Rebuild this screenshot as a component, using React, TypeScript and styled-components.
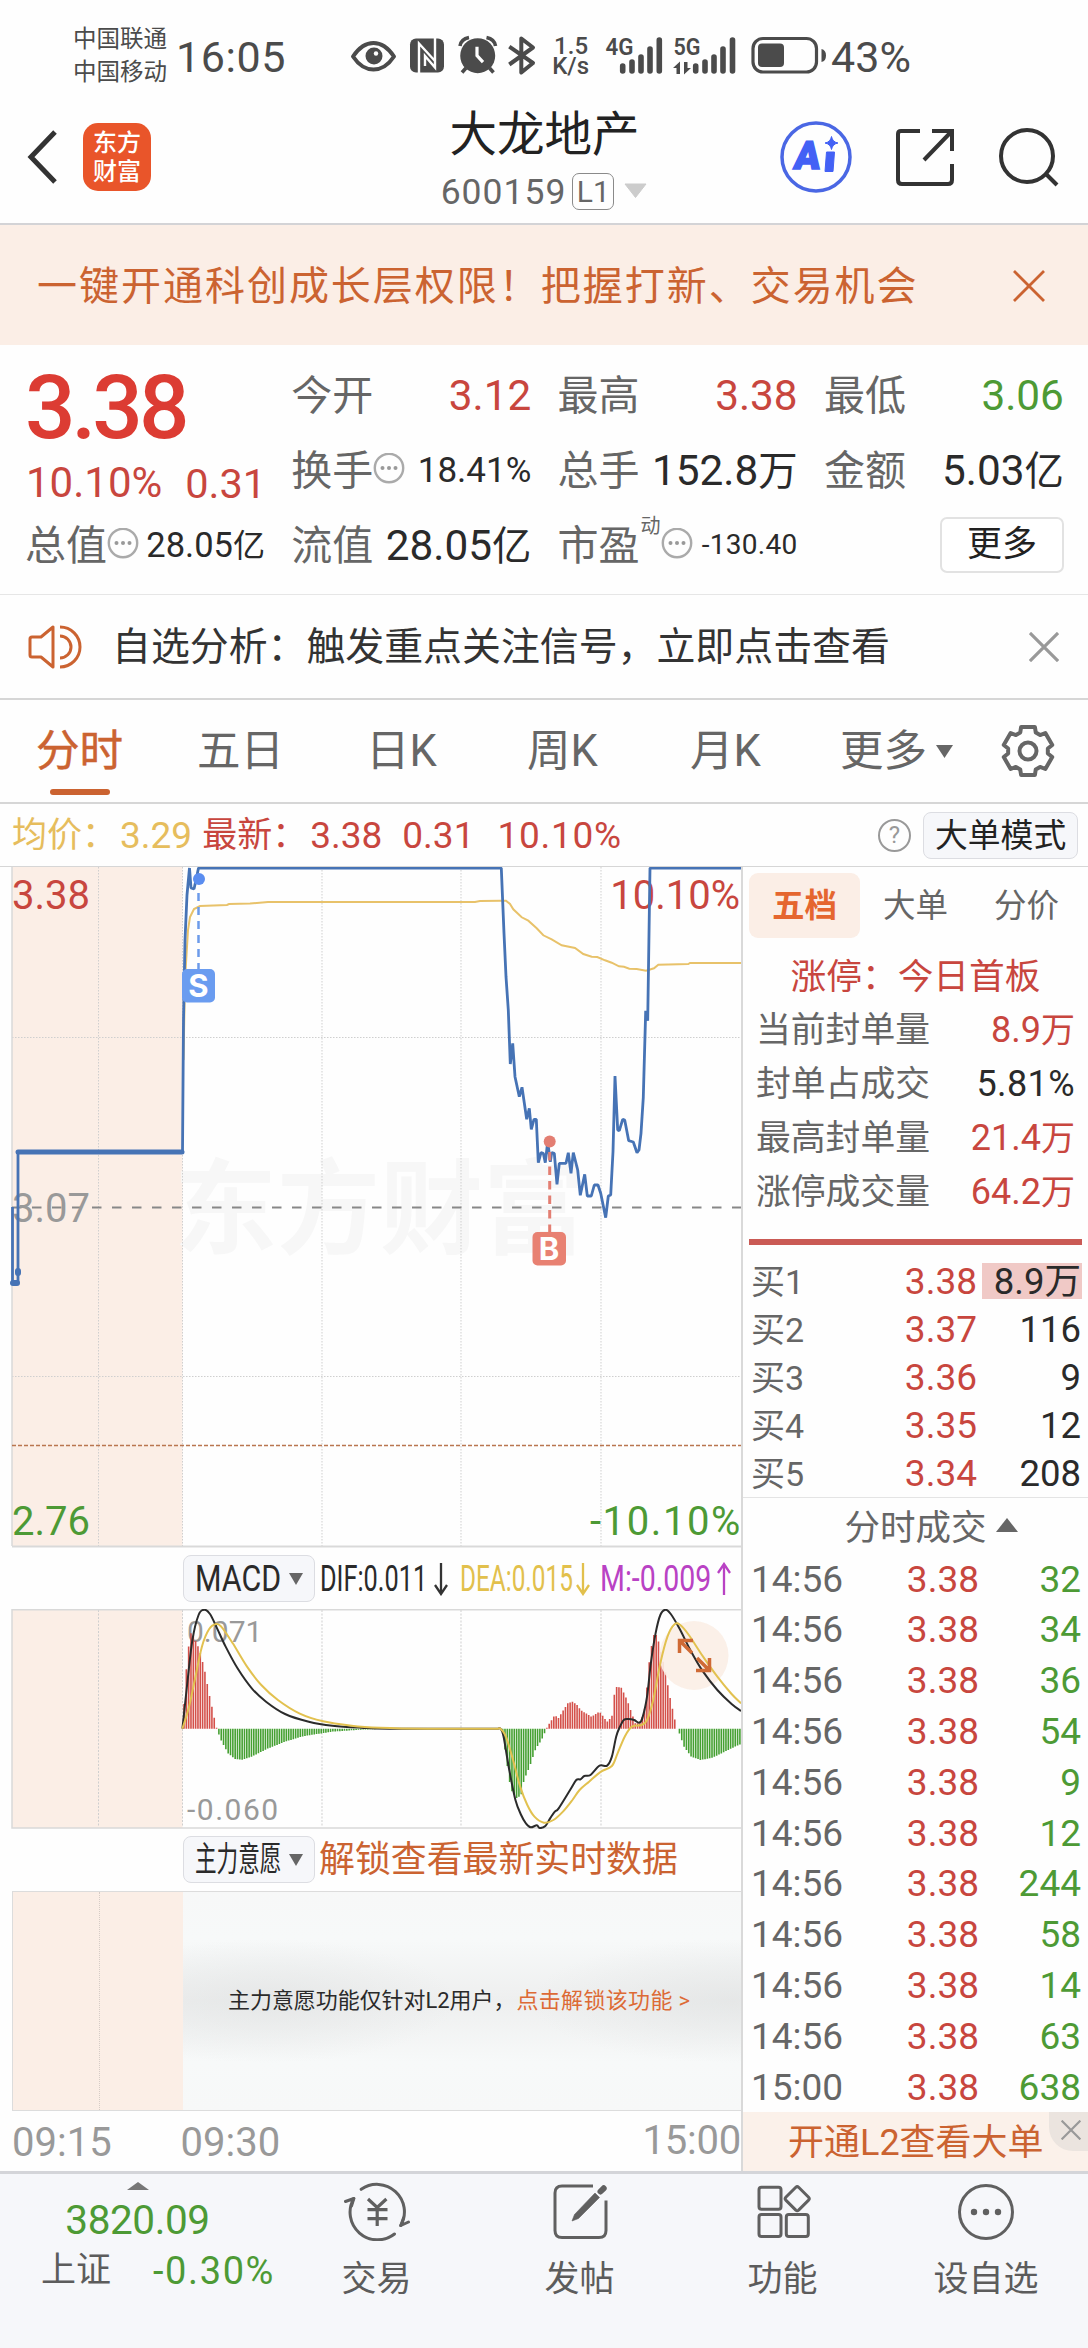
import React from "react";
import styled, { createGlobalStyle } from "styled-components";

const RED = "#c8463e";
const GREEN = "#4d9a35";
const ORANGE = "#cb6331";
const GREY = "#666666";
const INK = "#2a2a2a";
const PEACH = "#fbeee6";

const GlobalStyle = createGlobalStyle`
  * { box-sizing: border-box; }
  body {
    margin: 0;
    background: #fefefe;
    font-family: Roboto, "Noto Sans CJK SC", sans-serif;
    color: ${INK};
  }
  svg { display: block; flex: none; }
`;

const Screen = styled.div`
  width: 1088px;
  height: 2348px;
  overflow: hidden;
  display: flex;
  flex-direction: column;
`;

const Text = styled.span<{ $size: number; $color?: string; $weight?: number; $ls?: number; $ml?: number }>`
  font-size: ${(p) => p.$size}px;
  line-height: 1.1;
  padding-top: 0.08em;
  white-space: nowrap;
  color: ${(p) => p.$color ?? INK};
  font-weight: ${(p) => p.$weight ?? 400};
  letter-spacing: ${(p) => p.$ls ?? 0}px;
  margin-left: ${(p) => p.$ml ?? 0}px;
`;

/* Horizontally condensed label: the box has the final width, the glyphs shrink into it. */
const Narrow = styled.span<{ $size: number; $width: number; $scale: number; $color?: string; $ml?: number }>`
  display: block;
  flex: none;
  width: ${(p) => p.$width}px;
  margin-left: ${(p) => p.$ml ?? 0}px;
  font-size: ${(p) => p.$size}px;
  line-height: 1.1;
  white-space: nowrap;
  color: ${(p) => p.$color ?? INK};
  transform: scaleX(${(p) => p.$scale});
  transform-origin: 0 50%;
`;

/* ---------- status bar ---------- */

const StatusRow = styled.div`
  height: 106px;
  padding: 5px 0 0 73px;
  display: flex;
  align-items: center;
`;

const Stack = styled.div<{ $gap: number; $ml?: number; $width?: number }>`
  display: flex;
  flex-direction: column;
  align-items: center;
  margin-left: ${(p) => p.$ml ?? 0}px;
  width: ${(p) => (p.$width ? `${p.$width}px` : "auto")};
  & > * + * { margin-top: ${(p) => p.$gap}px; }
`;

const StatusIcons = styled.svg`
  margin-left: 61px;
`;

const StatusSignals = styled.svg`
  margin-left: 11px;
`;

const S = "#4b4b4b";

function StatusBar() {
  return (
    <StatusRow>
      <Stack $gap={5} $width={94}>
        <Text $size={23.5} $color={S}>中国联通</Text>
        <Text $size={23.5} $color={S}>中国移动</Text>
      </Stack>
      <Text $size={43} $color={S} $ml={9} $ls={0.6}>16:05</Text>
      <StatusIcons width="190" height="44" viewBox="346 34 190 44" fill="none" stroke={S}>
        <path d="M352 56.500C359 46 366 43 372.500 43S386 46 393 56.500C386 67 379 69.500 372.500 69.500S359 67 352 56.500Z" strokeWidth="4" strokeLinejoin="round" />
        <circle cx="373" cy="56" r="8.500" fill={S} stroke="none" />
        <circle cx="375" cy="53.500" r="2.200" fill="#fff" stroke="none" />
        <rect x="409" y="38.500" width="34" height="34" rx="6" fill={S} stroke="none" />
        <path d="M418 73V43.500L434 61M434 38V67.500L424 56V66" stroke="#fefefe" strokeWidth="2.400" />
        <circle cx="476.700" cy="55.700" r="17.500" fill={S} stroke="none" />
        <path d="M459 46q1-7 9-8.500M494.500 46q-1-7-9-8.500M465 68l-4 4.500M488.500 68l4 4.500" strokeWidth="3.600" />
        <path d="M476 46.700v9l6 6.500" stroke="#fff" strokeWidth="3.200" />
        <path d="M508.300 46.700L532 63l-11.700 9.500v-34L532 47.500 508.300 64.500" strokeWidth="4" strokeLinejoin="round" />
      </StatusIcons>
      <Stack $gap={-8} $ml={13} $width={42}>
        <Text $size={24} $color={S} $weight={500}>1.5</Text>
        <Text $size={24} $color={S} $weight={500} $ml={-1}>K/s</Text>
      </Stack>
      <StatusSignals width="226" height="44" viewBox="602 34 226 44" fill={S}>
        <text x="604.500" y="55" fontSize="24" fontWeight="600" textLength="28" lengthAdjust="spacingAndGlyphs">4G</text>
        <g stroke={S} strokeWidth="5.600" strokeLinecap="round">
          <path d="M621.700 66V71M631 62V71M640 57V71M649 49V71M658.300 40V71" />
          <path d="M694.700 66V71M704 62V71M713 57V71M722 49V71M731.500 40V71" />
        </g>
        <text x="672.500" y="55" fontSize="24" fontWeight="600" textLength="27" lengthAdjust="spacingAndGlyphs">5G</text>
        <path d="M672 68l7-6.500V74h-3.500v-6zM690 68l-7 6.500V62h3.500v6z" />
        <rect x="752" y="38.500" width="63.500" height="33.500" rx="10" fill="none" stroke={S} strokeWidth="3.200" />
        <rect x="757" y="43.500" width="26" height="23.500" rx="4" />
        <path d="M820.500 49q4.500 1 4.500 6.500t-4.500 6.500z" />
      </StatusSignals>
      <Text $size={43} $color={S} $ml={2}>43%</Text>
    </StatusRow>
  );
}

/* ---------- title bar ---------- */

const TitleBar = styled.header`
  height: 119px;
  border-bottom: 2px solid #d3d3d6;
  display: flex;
  align-items: flex-start;
  justify-content: space-between;
  padding: 15px 25px 0 26px;
`;

const TitleSide = styled.div<{ $gap: number }>`
  width: 284px;
  height: 72px;
  display: flex;
  align-items: center;
  gap: ${(p) => p.$gap}px;
`;

const BrandLogo = styled.div`
  width: 68px;
  height: 68px;
  border-radius: 15px;
  background: #e9552a;
  color: #fff;
  display: flex;
  flex-direction: column;
  align-items: center;
  justify-content: center;
  font-size: 24px;
  font-weight: 500;
  line-height: 29px;
  padding-top: 2px;
`;

const TitleCenter = styled.div`
  display: flex;
  flex-direction: column;
  align-items: center;
  margin-top: -14px;
`;

const CodeRow = styled.div`
  height: 56px;
  display: flex;
  align-items: center;
`;

const LevelTag = styled.span`
  width: 42px;
  height: 37px;
  margin-left: 6px;
  border: 1.5px solid #8a8a8a;
  border-radius: 7px;
  font-size: 30px;
  line-height: 36px;
  color: ${GREY};
  text-align: center;
`;

const StockName = styled.h1`
  margin: 0;
  font-size: 47.500px;
  font-weight: 400;
  line-height: 56px;
  color: #222;
`;

function Header() {
  return (
    <TitleBar>
      <TitleSide $gap={25}>
        <svg width="32" height="56" viewBox="0 0 32 56" fill="none" stroke="#333" strokeWidth="5">
          <path d="M29 3L5 28l24 25" />
        </svg>
        <BrandLogo>
          <span>东方</span>
          <span>财富</span>
        </BrandLogo>
      </TitleSide>
      <TitleCenter>
        <StockName>大龙地产</StockName>
        <CodeRow>
          <Text $size={35.5} $color={GREY} $ls={1}>600159</Text>
          <LevelTag>L1</LevelTag>
          <svg width="34" height="16" viewBox="-10 0 34 16"><path d="M1 1h21L11.500 14.500z" fill="#ccc" stroke="#ccc" strokeLinejoin="round" /></svg>
        </CodeRow>
      </TitleCenter>
      <TitleSide $gap={42}>
        <svg width="74" height="74" viewBox="0 0 74 74">
          <circle cx="37" cy="37" r="34" fill="none" stroke="#4a67e4" strokeWidth="3.500" />
          <text x="20" y="49" fontSize="39" fontWeight="900" fill="#4361f5" stroke="#4361f5" strokeWidth="1.600" textLength="26" lengthAdjust="spacingAndGlyphs" transform="skewX(-7)">A</text>
          <path d="M47.500 32h8l-1.500 19.500h-8zM52.500 16.500q1 5.500 6.500 6.500-5.500 1-6.500 6.500-1-5.500-6.500-6.500 5.500-1 6.500-6.500z" fill="#4361f5" stroke="#4361f5" strokeWidth="1" strokeLinejoin="round" />
        </svg>
        <svg width="60" height="60" viewBox="0 0 60 60" fill="none" stroke="#333" strokeWidth="4">
          <path d="M25 4H6q-3 0-3 3v46q0 4 4 4h46q4 0 4-4V37M37 4h20v20M56 5L29 33" />
        </svg>
        <svg width="62" height="62" viewBox="0 0 62 62" fill="none" stroke="#333" strokeWidth="4">
          <circle cx="30" cy="30" r="26" />
          <path d="M48 47l12 12" />
        </svg>
      </TitleSide>
    </TitleBar>
  );
}

/* ---------- promo banner and notice ---------- */

const Banner = styled.div`
  height: 120px;
  background: ${PEACH};
  padding: 1px 43px 0 37px;
  display: flex;
  align-items: center;
  justify-content: space-between;
`;

const Notice = styled.div`
  height: 106px;
  border-top: 1px solid #e6e6e6;
  border-bottom: 2px solid #d6d6d6;
  padding: 0 29px 0 28px;
  display: flex;
  align-items: center;
`;

const NoticeText = styled.span`
  flex: 1;
  margin-left: 30px;
  font-size: 38.900px;
  line-height: 44px;
  color: #333;
`;

function Cross({ size, color, width }: { size: number; color: string; width: number }) {
  return (
    <svg width={size} height={size} viewBox="0 0 32 32" stroke={color} strokeWidth={width} fill="none">
      <path d="M1 1l30 30M31 1L1 31" />
    </svg>
  );
}

/* ---------- quote ---------- */

const Quote = styled.section`
  height: 249px;
  padding: 12px 23px 0 25px;
  display: grid;
  grid-template-columns: 240px 240px 240px 240px;
  grid-template-rows: 75px 75px 75px;
  column-gap: 26.300px;
`;

const Cell = styled.div`
  display: flex;
  align-items: center;
  justify-content: space-between;
`;

const LabelGroup = styled.div`
  display: flex;
  align-items: center;
`;

const PriceBlock = styled.div`
  grid-row: span 2;
  display: flex;
  flex-direction: column;
`;

const BigPrice = styled.div`
  height: 100px;
  padding-top: 6px;
  font-size: 89px;
  line-height: 90px;
  font-weight: 500;
  letter-spacing: -4px;
  color: #dc3c33;
`;

const MoreButton = styled.button`
  margin-left: auto;
  width: 124px;
  height: 56px;
  padding: 0;
  background: #fff;
  border: 2px solid #e2e2e2;
  border-radius: 7px;
  font: 400 35px/48px Roboto, "Noto Sans CJK SC", sans-serif;
  color: #222;
`;

const Sup = styled.sup`
  font-size: 20px;
  line-height: 20px;
  color: ${GREY};
  align-self: flex-start;
  margin: -4px 0 0 1px;
`;

function Dots() {
  return (
    <svg width="32" height="32" viewBox="0 0 32 32" fill="#999">
      <circle cx="16" cy="15" r="14.200" fill="none" stroke="#aaa" strokeWidth="2.400" />
      <circle cx="9.500" cy="15" r="2" /><circle cx="16" cy="15" r="2" /><circle cx="22.500" cy="15" r="2" />
    </svg>
  );
}

type Stat = { label: string; value: string; unit?: string; color?: string; size?: number; ls?: number; dots?: boolean; sup?: string };

function StatCell({ label, value, unit, color, size = 42.3, ls, dots, sup }: Stat) {
  return (
    <Cell>
      <LabelGroup>
        <Text $size={41} $color={GREY}>{label}</Text>
        {sup && <Sup>{sup}</Sup>}
        {dots && <Dots />}
      </LabelGroup>
      <Text $size={size} $color={color ?? INK} $ls={ls}>
        {value}
        {unit && <Text $size={size * 0.93} $color={color ?? INK}>{unit}</Text>}
      </Text>
    </Cell>
  );
}

function QuotePanel() {
  return (
    <Quote>
      <PriceBlock>
        <BigPrice>3.38</BigPrice>
        <LabelGroup>
          <Text $size={42} $color={RED} $ml={1}>10.10%</Text>
          <Text $size={41.5} $color={RED} $ml={23}>0.31</Text>
        </LabelGroup>
      </PriceBlock>
      <StatCell label="今开" value="3.12" color={RED} />
      <StatCell label="最高" value="3.38" color={RED} />
      <StatCell label="最低" value="3.06" color={GREEN} />
      <StatCell label="换手" dots value="18.41%" size={35} />
      <StatCell label="总手" value="152.8" unit="万" />
      <StatCell label="金额" value="5.03" unit="亿" />
      <StatCell label="总值" dots value="28.05" unit="亿" size={34.5} />
      <StatCell label="流值" value="28.05" unit="亿" />
      <StatCell label="市盈" sup="动" dots value="-130.40" size={28} ls={0.3} />
      <Cell><MoreButton>更多</MoreButton></Cell>
    </Quote>
  );
}

/* ---------- period tabs ---------- */

const Tabs = styled.nav`
  height: 104px;
  padding-left: 36px;
  border-bottom: 2px solid #d6d6d6;
  display: grid;
  grid-template-columns: 161px 169px 161px 163px 150px 161px auto;
  align-items: center;
`;

const Tab = styled.div<{ $active?: boolean }>`
  height: 102px;
  display: flex;
  flex-direction: column;
  font-size: 43.500px;
  line-height: 104px;
  font-weight: 400;
  color: ${(p) => (p.$active ? ORANGE : GREY)};
  -webkit-text-stroke: ${(p) => (p.$active ? `0.5px ${ORANGE}` : "0")};
`;

const Underline = styled.i`
  width: 60px;
  height: 6px;
  border-radius: 3px;
  margin: -15px 0 0 14px;
  background: ${ORANGE};
`;

const TabInline = styled.div`
  display: flex;
  align-items: center;
  gap: 9px;
`;

function Gear() {
  const pts: string[] = [];
  for (let i = 0; i < 6; i++) {
    const base = (i * Math.PI) / 3 - Math.PI / 2;
    [[-0.28, 25], [0.28, 25], [0.4, 20], [0.65, 20]].forEach(([a, r]) => {
      pts.push(`${27 + r * Math.cos(base + a)},${27 + r * Math.sin(base + a)}`);
    });
  }
  return (
    <svg width="54" height="54" viewBox="0 0 54 54" fill="none" stroke={GREY} strokeWidth="4" strokeLinejoin="round">
      <polygon points={pts.join(" ")} />
      <circle cx="27" cy="27" r="8.500" />
    </svg>
  );
}

function PeriodTabs() {
  return (
    <Tabs>
      <Tab $active>分时<Underline /></Tab>
      <Tab>五日</Tab>
      <Tab>日K</Tab>
      <Tab>周K</Tab>
      <Tab>月K</Tab>
      <TabInline>
        <Tab>更多</Tab>
        <svg width="17" height="13" viewBox="0 0 17 13"><path d="M0 0h17L8.500 13z" fill={GREY} /></svg>
      </TabInline>
      <Gear />
    </Tabs>
  );
}

/* ---------- average / latest row ---------- */

const InfoRow = styled.div`
  height: 63px;
  padding: 0 10px 0 12px;
  border-bottom: 1px solid #d6d6d6;
  display: flex;
  align-items: center;
`;

const Chip = styled.button<{ $width: number; $ml?: string }>`
  flex: none;
  display: flex;
  align-items: center;
  width: ${(p) => p.$width}px;
  height: 47px;
  margin-left: ${(p) => p.$ml ?? "0"};
  padding: 0 11px;
  background: #f6f7fa;
  border: 1.5px solid #dcdde2;
  border-radius: 8px;
  font-family: Roboto, "Noto Sans CJK SC", sans-serif;
  color: #222;
`;

const Help = styled.span`
  width: 33px;
  height: 33px;
  margin-left: auto;
  border: 2.500px solid #999;
  border-radius: 50%;
  font-size: 24px;
  line-height: 29px;
  text-align: center;
  color: #999;
`;

/* ---------- charts ---------- */

const Body = styled.main`
  height: 1304px;
  display: flex;
`;

const ChartColumn = styled.section`
  width: 743px;
  border-right: 2px solid #d9d9d9;
  display: flex;
  flex-direction: column;
`;

type Pt = [number, number];

const priceTail: Pt[] = [
  [64, 24], [72, 220], [78, 350], [85, 450], [91, 612], [98, 550], [105, 650], [118, 710], [126, 682], [140, 778],
  [148, 745], [154, 808], [162, 778], [169, 778], [175, 908], [183, 878], [190, 880], [196, 908], [203, 845],
  [211, 905], [215, 878], [223, 880], [231, 973], [238, 910], [258, 910], [265, 878], [273, 940], [280, 878],
  [293, 930], [301, 1006], [314, 943], [322, 1008], [334, 1008], [343, 975], [354, 975], [362, 1000], [377, 1073],
  [385, 1008], [392, 1005], [399, 875], [405, 648], [413, 810], [418, 812], [428, 778], [434, 780], [446, 842],
  [460, 846], [471, 878], [477, 870], [483, 820], [490, 712], [497, 452], [503, 482], [510, 24], [783, 24],
];

const avgTail: Pt[] = [
  [64, 122], [78, 122], [90, 132], [100, 148], [125, 172], [145, 182], [170, 205], [190, 226], [215, 238],
  [245, 256], [285, 264], [310, 282], [335, 290], [352, 291], [375, 301], [395, 308], [417, 319], [432, 320],
  [448, 326], [470, 327], [498, 332], [522, 325], [535, 314], [625, 312], [630, 309], [783, 309],
];

const tail = (pts: Pt[]): Pt[] => pts.map(([x, y]) => [480 + x / 3, 860 + y / 3]);

const priceLine: Pt[] = [
  [12.5, 1207], [12.5, 1283], [18, 1283], [18, 1152], [182.500, 1152], [183.500, 1020], [185, 940], [187, 895], [189.500, 868],
  [191, 888], [194, 889], [196, 880], [198.500, 868], ...tail(priceTail),
];

const avgLine: Pt[] = [
  [183.500, 1060], [185, 980], [188, 930], [190, 917], [194, 909], [200, 906], [227, 905], [229, 904], [250, 903.500],
  [268, 902], [475, 902], [480, 901], ...tail(avgTail),
];

const path = (pts: Pt[]) => "M" + pts.map(([x, y]) => `${x.toFixed(1)} ${y.toFixed(1)}`).join("L");

const gridX = [98.5, 182.5, 322, 461, 601];

const Watermark = styled.text`
  font-family: "Noto Sans CJK SC", sans-serif;
  font-size: 103px;
  font-weight: 700;
  fill: #f7f7f7;
`;

function PriceChart() {
  return (
    <svg width="741" height="681" viewBox="0 867 741 681" fontSize="40">
      <rect x="12" y="867" width="170.500" height="679" fill={PEACH} />
      <Watermark x="174" y="1246">东方财富</Watermark>
      <g stroke="#cfcfcf" strokeWidth="1" strokeDasharray="1.500 1.500">
        {gridX.map((x) => <path key={x} d={`M${x} 867V1546`} />)}
        <path d="M12 1037.500H741M12 1376.500H741" />
      </g>
      <path d="M12 867V1546" stroke="#d9d9d9" strokeWidth="1.500" />
      <path d="M12 1546.500H741" stroke="#d9d9d9" strokeWidth="2" />
      <path d="M12 1207.500H741" stroke="#888" strokeWidth="2" strokeDasharray="9.500 10.500" />
      <path d="M12 1445.500H741" stroke="#b9764f" strokeWidth="1.500" strokeDasharray="4 2" />
      <text x="12" y="1221.500" fill="#999">3.07</text>
      <text x="740" y="909" fill={RED} textAnchor="end">10.10%</text>
      <text x="12" y="909" fill={RED}>3.38</text>
      <text x="12" y="1534.500" fill={GREEN}>2.76</text>
      <text x="742" y="1534.500" fill={GREEN} textAnchor="end" letterSpacing="1.600">-10.10%</text>
      <path d={path(avgLine)} fill="none" stroke="#e8c26a" strokeWidth="2" />
      <path d={path(priceLine)} fill="none" stroke="#4673b5" strokeWidth="2.800" strokeLinejoin="bevel" />
      <path d="M18 1152H182" stroke="#4673b5" strokeWidth="5" strokeLinecap="round" />
      <path d="M13 1283H17M18 1271V1273" stroke="#4673b5" strokeWidth="6" strokeLinecap="round" />
      <circle cx="199" cy="879" r="6" fill="#5a8df0" />
      <path d="M198.500 893V969" stroke="#6c9bea" strokeWidth="2.500" strokeDasharray="8 6" />
      <rect x="182" y="969" width="33" height="33.500" rx="5" fill="#6a9cf0" />
      <text x="198.500" y="997" fontSize="31" fontWeight="700" fill="#fff" textAnchor="middle" fontFamily="Inter, sans-serif">S</text>
      <circle cx="549.700" cy="1141.500" r="6" fill="#e37e72" />
      <path d="M549.700 1152V1232" stroke="#e37e72" strokeWidth="3" strokeDasharray="8.500 6" />
      <rect x="532.500" y="1232" width="33.500" height="33.500" rx="5" fill="#e88172" />
      <text x="549" y="1260" fontSize="31" fontWeight="700" fill="#fff" textAnchor="middle" fontFamily="Inter, sans-serif">B</text>
    </svg>
  );
}

const ChartHead = styled.div`
  height: 61px;
  padding-left: 183px;
  display: flex;
  align-items: center;
`;

function Caret() {
  return <svg width="14" height="14" viewBox="0 0 14 14"><path d="M0 1h14L7 13z" fill={GREY} /></svg>;
}

function Arrow({ color, up, ml }: { color: string; up?: boolean; ml: number }) {
  return (
    <svg width={14 + ml} height="34" viewBox={`${-ml} 0 ${14 + ml} 34`} fill="none" stroke={color} strokeWidth="2.300">
      {up ? <path d="M7 33V2M1 11L7 2l6 9" /> : <path d="M7 1v31M1 23l6 9 6-9" />}
    </svg>
  );
}

const ChipLabel = styled.span`
  flex: 1;
  height: 40px;
  display: flex;
  align-items: center;
`;

/* Signed histogram envelope; values are vertical positions on a 3x scale with zero at 566. */
const histogram: Pt[] = [
  [385, 550], [389, 450], [394, 353], [398, 310], [403, 272], [408, 290], [420, 330], [430, 385], [440, 460], [455, 560],
  [458, 572], [465, 600], [480, 640], [495, 657], [510, 659], [530, 650], [560, 628], [600, 605], [640, 588],
  [700, 575], [760, 569], [820, 566], [1054, 566], [1058, 575], [1065, 650], [1075, 748], [1088, 775], [1097, 765],
  [1103, 720], [1115, 680], [1128, 625], [1140, 600], [1150, 568], [1152, 560], [1168, 525], [1175, 535], [1195, 490],
  [1205, 485], [1215, 495], [1222, 510], [1245, 530], [1262, 515], [1278, 545], [1288, 530], [1295, 440], [1308, 443],
  [1320, 480], [1330, 520], [1337, 550], [1348, 550], [1358, 500], [1367, 360], [1375, 285], [1383, 285], [1391, 335],
  [1400, 390], [1410, 470], [1424, 562], [1428, 572], [1440, 620], [1455, 650], [1475, 660], [1500, 653], [1530, 632],
  [1562, 610],
];

const dif: Pt[] = [
  [384, 566], [395, 420], [405, 300], [418, 225], [430, 209], [442, 222], [456, 262], [475, 320], [500, 385], [530, 445],
  [560, 485], [600, 522], [650, 545], [700, 557], [760, 563], [820, 566], [1048, 566], [1054, 567], [1060, 590], [1072, 690],
  [1085, 780], [1097, 825], [1107, 850], [1117, 862], [1130, 856], [1136, 864], [1148, 858], [1158, 835], [1168, 815],
  [1176, 805], [1200, 750], [1213, 720], [1222, 718], [1230, 708], [1243, 705], [1262, 677], [1278, 677], [1288, 650],
  [1297, 590], [1305, 560], [1313, 540], [1322, 537], [1335, 540], [1345, 548], [1352, 535], [1362, 470], [1370, 370],
  [1380, 280], [1390, 225], [1401, 209], [1412, 222], [1430, 265], [1455, 335], [1480, 395], [1510, 450], [1540, 492],
  [1560, 513],
];

const dea: Pt[] = [
  [384, 566], [398, 500], [410, 420], [425, 320], [440, 268], [455, 252], [467, 262], [490, 310], [520, 380], [550, 435],
  [585, 480], [630, 520], [680, 544], [740, 557], [800, 563], [900, 566], [1048, 566], [1054, 567], [1065, 590], [1080, 660],
  [1095, 740], [1110, 795], [1125, 830], [1145, 848], [1165, 840], [1185, 815], [1205, 780], [1220, 750], [1240, 725],
  [1265, 695], [1288, 678], [1300, 640], [1315, 590], [1330, 560], [1350, 555], [1362, 540], [1375, 480], [1390, 370],
  [1405, 290], [1420, 253], [1432, 255], [1450, 285], [1480, 350], [1510, 410], [1540, 462], [1560, 490],
];

const macdPt = ([x, y]: Pt): Pt => [x / 2.105, 1540 + y / 3];

/* Catmull-Rom smoothing; neighbours beyond a long straight run are ignored so it does not overshoot. */
function smooth(src: Pt[]) {
  const p = src.map(macdPt);
  let d = `M${p[0][0]} ${p[0][1]}`;
  for (let i = 0; i < p.length - 1; i++) {
    const b = p[i], c = p[i + 1];
    let a = p[Math.max(0, i - 1)];
    const e = p[Math.min(p.length - 1, i + 2)];
    if (b[0] - a[0] > 50) a = b;
    const k = c[0] - b[0] > 50 ? 0 : 1 / 6;
    d += `C${b[0] + (c[0] - a[0]) * k} ${b[1] + (c[1] - a[1]) * k} ${c[0] - (e[0] - b[0]) * k} ${c[1] - (e[1] - b[1]) * k} ${c[0]} ${c[1]}`;
  }
  return d;
}

function bars(sign: 1 | -1) {
  const p = histogram.map(macdPt);
  const zero = 1728.7;
  let d = "";
  for (let x = 184; x < 742; x += 2.326) {
    const i = p.findIndex((q, n) => n > 0 && q[0] >= x);
    if (i < 1) continue;
    const t = (x - p[i - 1][0]) / (p[i][0] - p[i - 1][0]);
    const y = p[i - 1][1] + t * (p[i][1] - p[i - 1][1]);
    if ((zero - y) * sign > 0.4) d += `M${x.toFixed(2)} ${zero}V${y.toFixed(1)}`;
  }
  return d;
}

function MacdChart() {
  return (
    <svg width="741" height="220" viewBox="0 1609 741 220" fontSize="30">
      <rect x="12" y="1609" width="170.500" height="219" fill={PEACH} />
      <g stroke="#cfcfcf" strokeWidth="1" strokeDasharray="2 1.500">
        {gridX.map((x) => <path key={x} d={`M${x} 1610V1827`} />)}
      </g>
      <path d="M741 1609.700H12V1828H741" fill="none" stroke="#d9d9d9" strokeWidth="1.500" />
      <text x="187" y="1641.500" fill="#999">0.071</text>
      <text x="187" y="1819.500" fill="#999" letterSpacing="1.500">-0.060</text>
      <path d={bars(1)} stroke="#d4504a" strokeWidth="1.600" />
      <path d={bars(-1)} stroke="#45a032" strokeWidth="1.600" />
      <circle cx="694" cy="1655.500" r="34.500" fill={PEACH} opacity="0.9" />
      <path d={smooth(dif)} fill="none" stroke="#2b2b2b" strokeWidth="2" />
      <path d={smooth(dea)} fill="none" stroke="#e2c14f" strokeWidth="2" />
      <path d="M679.500 1653V1640.500H693M680 1641L692 1653M709.500 1658V1670.500H696M709 1670L697 1658" fill="none" stroke="#cf6a35" strokeWidth="3.500" />
    </svg>
  );
}

const LockedRow = styled.div`
  height: 220px;
  margin: 1px 0 0 12px;
  display: flex;
  border: 1.500px solid #dcdcdc;
  border-right: 0;
`;

const LockedAuction = styled.div`
  width: 170px;
  background: ${PEACH};
  display: flex;
  &::before {
    content: "";
    width: 86px;
    border-right: 1px dotted #d6ccc6;
  }
`;

const LockedPanel = styled.div`
  flex: 1;
  display: flex;
  align-items: center;
  padding: 0 0 2px 45px;
  background:
    radial-gradient(ellipse 190px 62px at 15% 50%, rgba(224, 226, 226, 0.6), rgba(224, 226, 226, 0)),
    radial-gradient(ellipse 200px 62px at 98% 50%, rgba(224, 226, 226, 0.6), rgba(224, 226, 226, 0)),
    linear-gradient(#f7f8f8 0%, #f7f9f9 22%, #eeefef 50%, #f7f9f9 78%, #f7f8f8 100%);
`;

const TimeAxis = styled.div`
  height: 60px;
  padding: 1px 0 0 12px;
  display: flex;
  align-items: center;
`;

const AxisEnd = styled.div`
  margin-left: auto;
`;

function Charts() {
  return (
    <ChartColumn>
      <PriceChart />
      <ChartHead>
        <Chip $width={132}>
          <ChipLabel><Narrow $size={37.5} $width={84} $scale={0.81}>MACD</Narrow></ChipLabel>
          <Caret />
        </Chip>
        <Narrow $size={37.5} $width={108} $scale={0.675} $ml={5}>DIF:0.011</Narrow>
        <Arrow color="#333" ml={6} />
        <Narrow $size={37.5} $width={110} $scale={0.65} $color="#e2c04c" $ml={12}>DEA:0.015</Narrow>
        <Arrow color="#e2c04c" ml={6} />
        <Narrow $size={37.5} $width={110} $scale={0.76} $color="#b942c4" $ml={10}>M:-0.009</Narrow>
        <Arrow color="#b942c4" up ml={7} />
      </ChartHead>
      <MacdChart />
      <ChartHead>
        <Chip $width={132}>
          <ChipLabel><Narrow $size={34} $width={86} $scale={0.635}>主力意愿</Narrow></ChipLabel>
          <Caret />
        </Chip>
        <Text $size={35.9} $color={ORANGE} $ml={4}>解锁查看最新实时数据</Text>
      </ChartHead>
      <LockedRow>
        <LockedAuction />
        <LockedPanel>
          <Text $size={21.95}>主力意愿功能仅针对L2用户，</Text>
          <Text $size={21.95} $color="#dd6a35" $ml={1} $ls={0.4}>点击解锁该功能 &gt;</Text>
        </LockedPanel>
      </LockedRow>
      <TimeAxis>
        <Text $size={40} $color="#999">09:15</Text>
        <Text $size={40} $color="#999" $ml={69}>09:30</Text>
        <AxisEnd><Text $size={40} $color="#999" $ls={-0.2}>15:00</Text></AxisEnd>
      </TimeAxis>
    </ChartColumn>
  );
}

/* ---------- order book ---------- */

const BookColumn = styled.aside`
  flex: 1;
  display: flex;
  flex-direction: column;
  & > * { flex-shrink: 0; }
`;

const BookTabs = styled.div`
  padding: 6px 5px 0 6px;
  display: grid;
  grid-template-columns: repeat(3, 111px);
`;

const BookTab = styled.div<{ $active?: boolean }>`
  height: 65px;
  border-radius: 9px;
  font-size: 32.500px;
  line-height: 67px;
  text-align: center;
  font-weight: ${(p) => (p.$active ? 700 : 400)};
  color: ${(p) => (p.$active ? "#e5662f" : GREY)};
  background: ${(p) => (p.$active ? PEACH : "transparent")};
`;

const LimitTitle = styled.div`
  height: 64px;
  padding-top: 7px;
  font-size: 35.700px;
  line-height: 64px;
  text-align: center;
  color: ${RED};
`;

const LimitRow = styled.div`
  height: 54px;
  padding: 0 13px;
  display: flex;
  align-items: center;
  justify-content: space-between;
`;

const RedRule = styled.div`
  height: 6px;
  margin: 21px 6px 12px;
  background: #ca5a55;
`;

const BuyRow = styled.div`
  height: 48px;
  padding: 0 6px 0 8px;
  display: grid;
  grid-template-columns: 120px 106px 105px;
  align-items: center;
`;

const Right = styled.div`
  display: flex;
  justify-content: flex-end;
`;

const Volume = styled.div<{ $mark?: boolean }>`
  height: 36px;
  margin-left: 5px;
  padding-right: 1px;
  display: flex;
  align-items: center;
  justify-content: flex-end;
  background: ${(p) => (p.$mark ? "#f0c9c6" : "transparent")};
`;

const DealHead = styled.div`
  height: 56px;
  border-top: 1.500px solid #e4e4e4;
  display: flex;
  align-items: center;
  justify-content: center;
  gap: 9px;
  padding: 4px 0 0 31px;
`;

const DealRow = styled.div`
  height: 50.800px;
  padding: 0 7px 0 8px;
  display: grid;
  grid-template-columns: 120px 108px 102px;
  align-items: center;
`;

const L2Bar = styled.div`
  position: relative;
  height: 59px;
  background: #fbf1ea;
  font-size: 36px;
  line-height: 63px;
  padding-left: 45px;
  color: ${ORANGE};
`;

const L2Close = styled.span`
  position: absolute;
  top: 0;
  right: 0;
  width: 39px;
  height: 39px;
  padding: 8px 0 0 12px;
  border-bottom-left-radius: 24px;
  background: #ebe4df;
`;

const limits = [
  { label: "当前封单量", value: "8.9", unit: "万", color: RED },
  { label: "封单占成交", value: "5.81%", color: INK },
  { label: "最高封单量", value: "21.4", unit: "万", color: RED },
  { label: "涨停成交量", value: "64.2", unit: "万", color: RED },
];

const buys = [["买1", "3.38", "8.9万"], ["买2", "3.37", "116"], ["买3", "3.36", "9"], ["买4", "3.35", "12"], ["买5", "3.34", "208"]];

const deals = [
  ["14:56", "32"], ["14:56", "34"], ["14:56", "36"], ["14:56", "54"], ["14:56", "9"], ["14:56", "12"],
  ["14:56", "244"], ["14:56", "58"], ["14:56", "14"], ["14:56", "63"], ["15:00", "638"],
];

function OrderBook() {
  return (
    <BookColumn>
      <BookTabs>
        <BookTab $active>五档</BookTab>
        <BookTab>大单</BookTab>
        <BookTab>分价</BookTab>
      </BookTabs>
      <LimitTitle>涨停：今日首板</LimitTitle>
      {limits.map((l) => (
        <LimitRow key={l.label}>
          <Text $size={34.8} $color={GREY}>{l.label}</Text>
          <Text $size={36} $color={l.color} $ls={l.unit ? 0 : 0.4}>{l.value}{l.unit && <Text $size={34} $color={l.color}>{l.unit}</Text>}</Text>
        </LimitRow>
      ))}
      <RedRule />
      {buys.map(([label, price, vol], i) => (
        <BuyRow key={label}>
          <Text $size={34} $color={GREY}>{label}</Text>
          <Right><Text $size={37} $color={RED}>{price}</Text></Right>
          <Volume $mark={i === 0}><Text $size={36.5}>{vol}</Text></Volume>
        </BuyRow>
      ))}
      <DealHead>
        <Text $size={35.5} $color={GREY}>分时成交</Text>
        <svg width="22" height="20" viewBox="0 0 22 20"><path d="M0 14L11 0l11 14z" fill={GREY} /></svg>
      </DealHead>
      {deals.map(([time, vol], i) => (
        <DealRow key={i}>
          <Text $size={37} $color={GREY}>{time}</Text>
          <Right><Text $size={37} $color={RED}>3.38</Text></Right>
          <Right><Text $size={37} $color={GREEN}>{vol}</Text></Right>
        </DealRow>
      ))}
      <L2Bar>
        开通L2查看大单
        <L2Close><Cross size={20} color="#999" width={3.5} /></L2Close>
      </L2Bar>
    </BookColumn>
  );
}

/* ---------- bottom bar ---------- */

const BottomBar = styled.footer`
  position: relative;
  flex: 1;
  border-top: 3px solid #d4d5d9;
  background: #f6f7fa;
  display: grid;
  grid-template-columns: 275px 203px 203px 203px 204px;
`;

const IndexBox = styled.div`
  display: flex;
  flex-direction: column;
  align-items: center;
  gap: 5px;
  padding-top: 8px;
`;

const IndexRow = styled.div`
  width: 100%;
  padding-left: 41px;
  display: flex;
  align-items: center;
`;

const Action = styled.div`
  display: flex;
  flex-direction: column;
  align-items: center;
  padding-top: 7px;
  font-size: 35px;
  line-height: 40px;
  color: #5c5c5c;
  svg { margin-bottom: 19px; }
`;

function Bottom() {
  const icon = { width: 66, height: 60, viewBox: "0 0 66 60", fill: "none", stroke: "#606060", strokeWidth: 3 };
  return (
    <BottomBar>
      <IndexBox>
        <svg width="22" height="8" viewBox="0 0 22 8"><path d="M0 8L11 0l11 8z" fill="#777" /></svg>
        <Text $size={40.5} $color={GREEN} $ls={-0.4}>3820.09</Text>
        <IndexRow>
          <Text $size={35} $color="#5c5c5c">上证</Text>
          <Text $size={38} $color={GREEN} $ml={42} $ls={1.6}>-0.30%</Text>
        </IndexRow>
      </IndexBox>
      <Action>
        <svg {...icon} strokeLinejoin="round" strokeLinecap="round">
          <path d="M17.200 8.300A27.500 27.500 0 0 1 56.800 44.500L64.500 41M50.500 53A27.500 27.500 0 0 1 9.800 17.500L1.500 20.500" />
          <path d="M9.800 17.500L7.500 25M56.800 44.500L59.500 37" />
          <path d="M24 18l9.200 8.500 9.200-8.500M33.200 27v18M23.500 28.700h20M23.500 37.700h20" strokeLinecap="butt" strokeWidth="3.200" />
        </svg>
        交易
      </Action>
      <Action>
        <svg {...icon}>
          <path d="M46 5H15q-7 0-7 7v37.500q0 7 7 7h37q7 0 7-7V19.500" />
          <path d="M25 40l2.500-6.500L48 12l4.500 4.500L31.500 37.500z" fill="#606060" strokeWidth="0.600" />
          <path d="M53.500 10.500l3.200-3.200" strokeWidth="6" strokeLinecap="round" />
        </svg>
        发帖
      </Action>
      <Action>
        <svg {...icon} strokeLinejoin="round">
          <rect x="9" y="6.200" width="22" height="22" rx="2.500" />
          <rect x="9" y="33.500" width="22" height="22" rx="2.500" />
          <rect x="36.300" y="33.500" width="22" height="22" rx="2.500" />
          <path d="M45.800 6.300q1.400-1.300 2.800 0l10 10q1.300 1.400 0 2.800l-10 10q-1.400 1.300-2.800 0l-10-10q-1.300-1.400 0-2.800z" />
        </svg>
        功能
      </Action>
      <Action>
        <svg {...icon}>
          <circle cx="33" cy="31" r="26.500" />
          <g fill="#606060" stroke="none"><circle cx="21" cy="31" r="3.200" /><circle cx="33" cy="31" r="3.200" /><circle cx="45" cy="31" r="3.200" /></g>
        </svg>
        设自选
      </Action>
    </BottomBar>
  );
}

export default function App() {
  return (
    <Screen>
      <GlobalStyle />
      <StatusBar />
      <Header />
      <Banner>
        <Text $size={40} $color={ORANGE} $ls={1.98}>一键开通科创成长层权限！把握打新、交易机会</Text>
        <Cross size={32} color={ORANGE} width={2.8} />
      </Banner>
      <QuotePanel />
      <Notice>
        <svg width="54" height="46" viewBox="0 0 54 46" fill="none" stroke={ORANGE} strokeWidth="3">
          <path d="M4 13h9L25 3v40L13 33H4q-2 0-2-2V15q0-2 2-2z" strokeLinejoin="round" />
          <path d="M32 12a11 11 0 0 1 0 22M32 3a20 20 0 0 1 0 40" />
        </svg>
        <NoticeText>自选分析：触发重点关注信号，立即点击查看</NoticeText>
        <Cross size={30} color="#999" width={3.4} />
      </Notice>
      <PeriodTabs />
      <InfoRow>
        <Text $size={35} $color="#e6bd5d">均价：</Text>
        <Text $size={37} $color="#e6bd5d" $ml={3}>3.29</Text>
        <Text $size={35} $color={RED} $ml={10}>最新：</Text>
        <Text $size={37} $color={RED} $ml={3}>3.38</Text>
        <Text $size={37} $color={RED} $ml={20}>0.31</Text>
        <Text $size={37} $color={RED} $ml={23} $ls={0.7}>10.10%</Text>
        <Help>?</Help>
        <Chip $width={155} $ml="12px"><Text $size={32.8} $color="#222">大单模式</Text></Chip>
      </InfoRow>
      <Body>
        <Charts />
        <OrderBook />
      </Body>
      <Bottom />
    </Screen>
  );
}
